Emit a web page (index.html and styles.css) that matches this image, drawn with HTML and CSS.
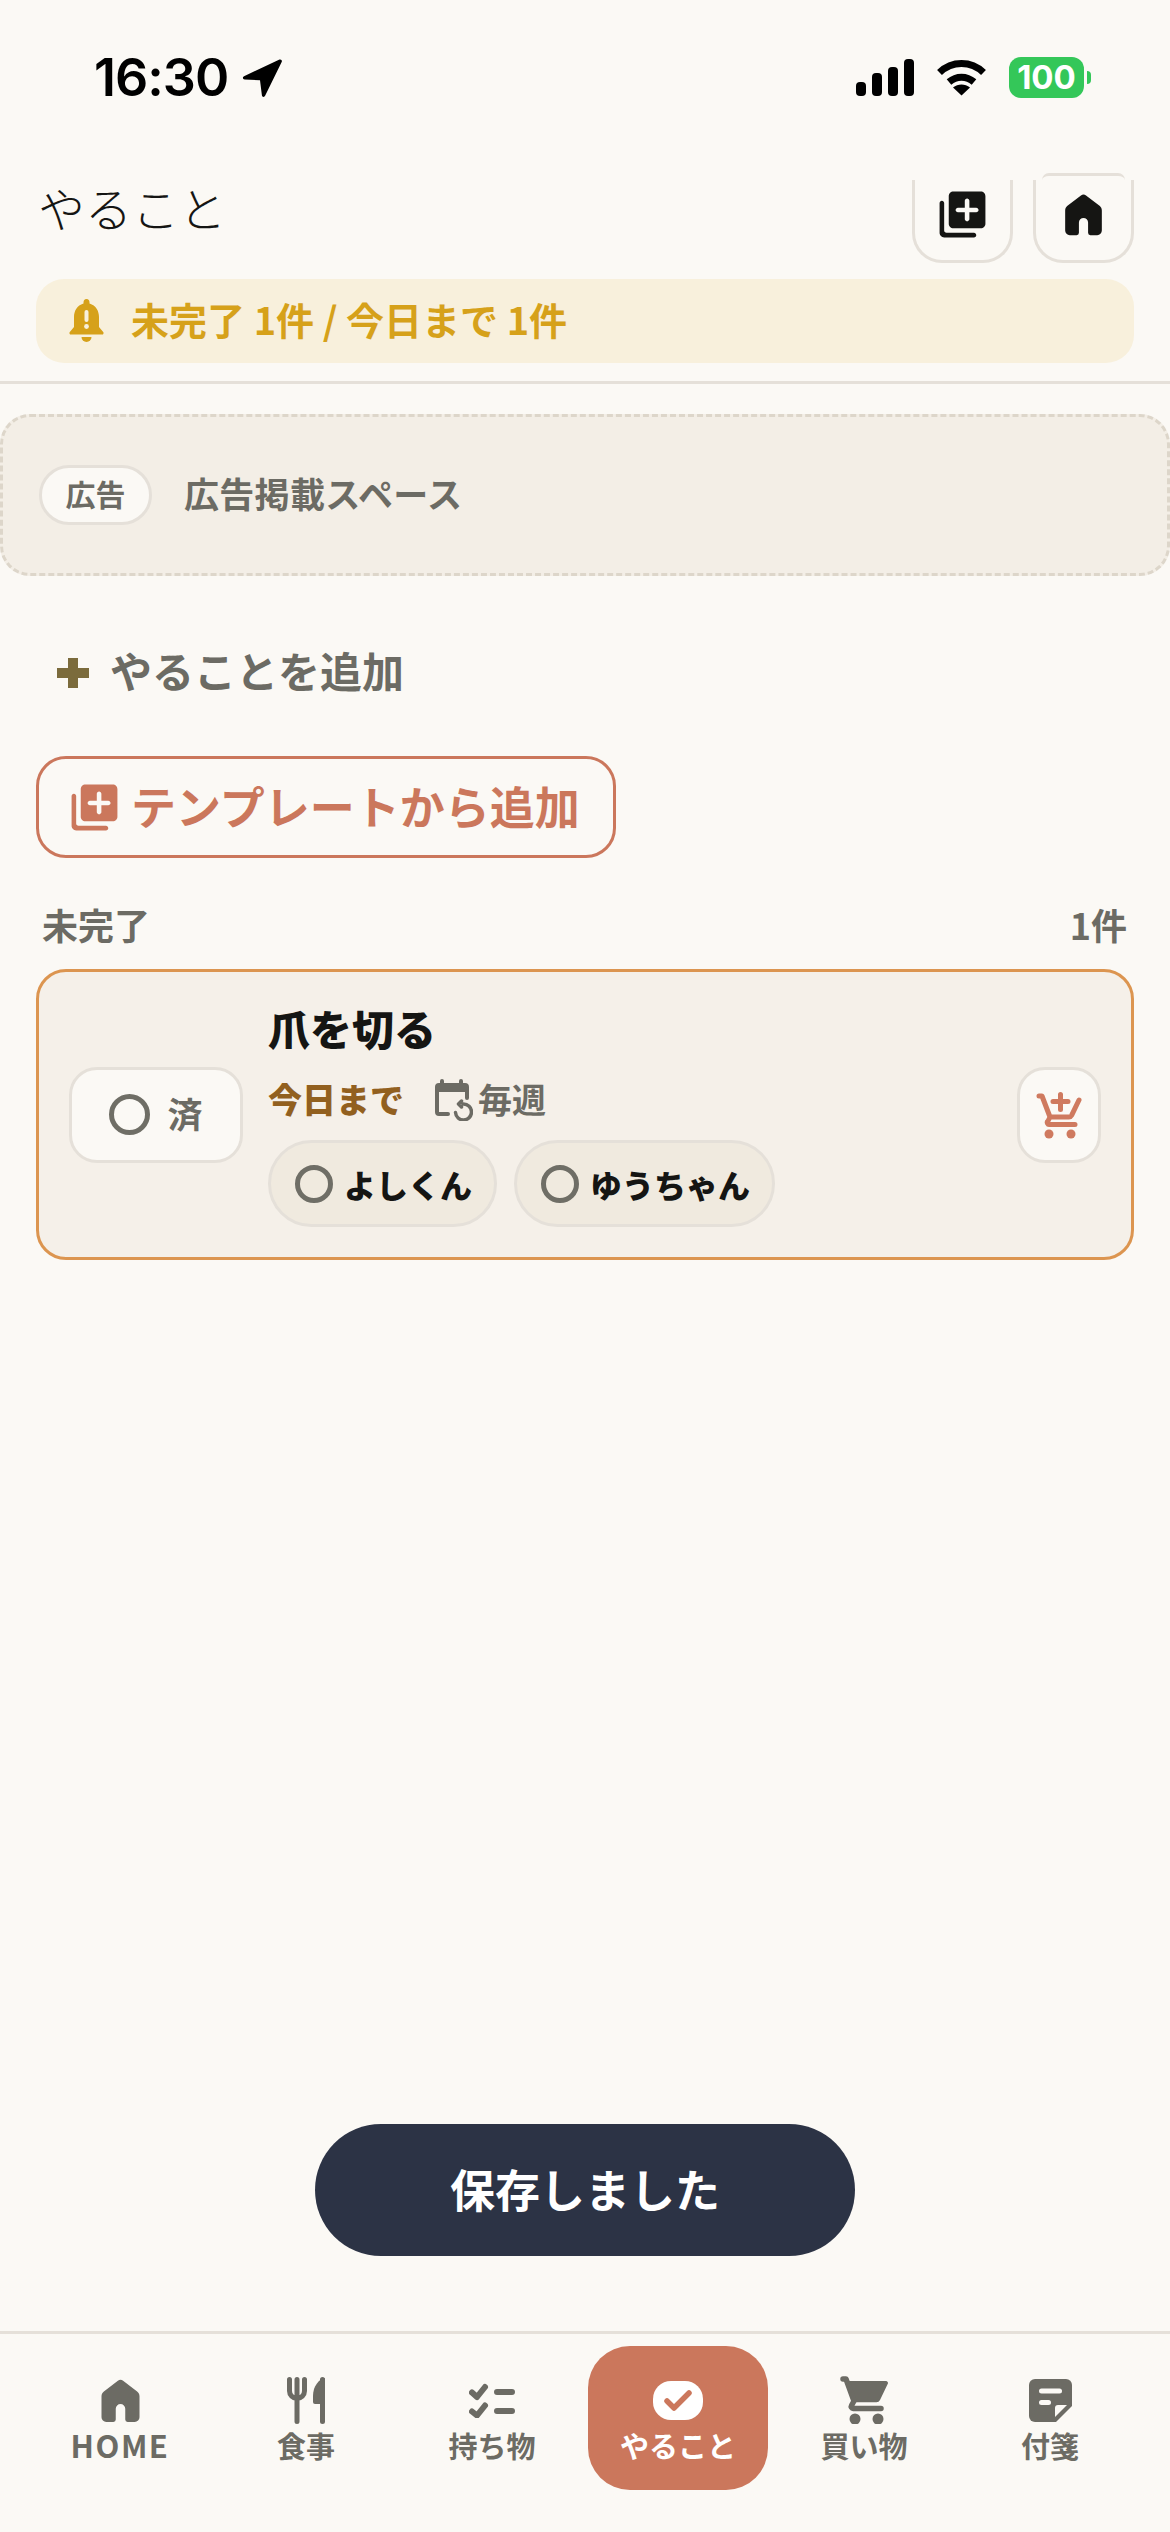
FILE: index.html
```html
<!DOCTYPE html>
<html lang="ja">
<head>
    <meta charset="UTF-8">
    <meta name="viewport" content="width=device-width, initial-scale=1.0">
    <title>やること</title>
    <link rel="stylesheet" href="styles.css">
</head>
<body>
<div class="app">

    <!-- Status bar -->
    <div class="status">
        <div class="status-left">
            <span class="time">16:30</span>
            <svg class="loc-icon" viewBox="0 0 40 38"><path d="M37.500.6 2 17.200c-1.800.9-1.300 3.200.7 3.300L18 21.300l1.900 15c.2 1.800 2.500 2.200 3.200.5L39.800 2.700c.5-1.400-.9-2.700-2.300-2.100z"/></svg>
        </div>
        <div class="status-right">
            <svg class="signal-icon" viewBox="0 0 58 37">
                <rect x="0" y="23" width="10" height="14" rx="4"/>
                <rect x="16" y="14" width="10" height="23" rx="4"/>
                <rect x="32" y="8" width="10" height="29" rx="4"/>
                <rect x="48" y="0" width="10" height="37" rx="4"/>
            </svg>
            <svg class="wifi-icon" viewBox="0 0 51 37">
                <path class="wifi-arc" d="M3.500 13.500C16 1.500 35 1.500 47.500 13.500"/>
                <path class="wifi-arc" d="M13 23C20.500 16.500 30.500 16.500 38 23"/>
                <path d="M25.500 36.500 17 28.500C22 24.500 29 24.500 34 28.500z"/>
            </svg>
            <div class="battery"><span class="battery-body">100</span><span class="battery-nub"></span></div>
        </div>
    </div>

    <!-- Header -->
    <div class="header">
        <div class="page-title">やること</div>
        <div class="header-btns">
            <div class="head-btn">
                <svg class="icon-55" viewBox="0 0 24 24"><path d="M3 6c-.55 0-1 .45-1 1v13c0 1.100.9 2 2 2h13c.55 0 1-.45 1-1s-.45-1-1-1H5c-.55 0-1-.45-1-1V7c0-.55-.45-1-1-1zm17-4H8c-1.100 0-2 .9-2 2v12c0 1.100.9 2 2 2h12c1.100 0 2-.9 2-2V4c0-1.100-.9-2-2-2zm-2 9h-3v3c0 .55-.45 1-1 1s-1-.45-1-1v-3h-3c-.55 0-1-.45-1-1s.45-1 1-1h3V6c0-.55.45-1 1-1s1 .45 1 1v3h3c.55 0 1 .45 1 1s-.45 1-1 1z"/></svg>
            </div>
            <div class="head-btn head-btn-home">
                <svg class="icon-55" viewBox="0 0 24 24"><path d="M10.900 3.700 5 8.200c-.6.5-1 1.200-1 2V19a2 2 0 0 0 2 2h3a1 1 0 0 0 1-1v-4.500a2 2 0 0 1 4 0V20a1 1 0 0 0 1 1h3a2 2 0 0 0 2-2v-8.800c0-.8-.4-1.500-1-2l-5.900-4.500a1.800 1.800 0 0 0-2.200 0z"/></svg>
            </div>
        </div>
    </div>

    <div class="alert">
        <svg class="bell-icon" viewBox="0 0 35 45">
            <path d="M17.500 0c2 0 3 1.500 3 3.500v1C27 6.500 30 12 30 18v10l4.200 5a1.500 1.500 0 0 1-1.200 2.500H2a1.500 1.500 0 0 1-1.200-2.500L5 28V18C5 12 8 6.500 14.500 4.500v-1c0-2 1-3.500 3-3.500z"/>
            <path d="M12.500 38h10a5 5 0 0 1-10 0z"/>
            <rect class="bell-mark" x="15.500" y="11" width="4" height="12" rx="2"/>
            <circle class="bell-mark" cx="17.500" cy="27.500" r="2.400"/>
        </svg>
        <span class="alert-text">未完了 1件 / 今日まで 1件</span>
    </div>
    <div class="header-line"></div>

    <!-- Ad space -->
    <div class="ad">
        <span class="ad-badge">広告</span>
        <span class="ad-text">広告掲載スペース</span>
    </div>

    <div class="add-row">
        <svg class="plus-icon" viewBox="0 0 32 30"><path d="M11 0h10v10h11v10H21v10H11V20H0V10h11z"/></svg>
        <span class="add-text">やることを追加</span>
    </div>

    <div class="template-btn">
        <svg class="icon-55" viewBox="0 0 24 24"><path d="M3 6c-.55 0-1 .45-1 1v13c0 1.100.9 2 2 2h13c.55 0 1-.45 1-1s-.45-1-1-1H5c-.55 0-1-.45-1-1V7c0-.55-.45-1-1-1zm17-4H8c-1.100 0-2 .9-2 2v12c0 1.100.9 2 2 2h12c1.100 0 2-.9 2-2V4c0-1.100-.9-2-2-2zm-2 9h-3v3c0 .55-.45 1-1 1s-1-.45-1-1v-3h-3c-.55 0-1-.45-1-1s.45-1 1-1h3V6c0-.55.45-1 1-1s1 .45 1 1v3h3c.55 0 1 .45 1 1s-.45 1-1 1z"/></svg>
        <span class="template-text">テンプレートから追加</span>
    </div>

    <div class="section-head">
        <span>未完了</span>
        <span>1件</span>
    </div>

    <!-- Todo card -->
    <div class="card">
        <div class="done-btn">
            <span class="ring"></span>
            <span class="done-text">済</span>
        </div>
        <div class="card-body">
            <div class="card-title">爪を切る</div>
            <div class="card-meta">
                <span class="due">今日まで</span>
                <svg class="repeat-icon" viewBox="0 0 40 42">
                    <path class="fill" d="M2 13V8a4 4 0 0 1 4-4h1V2a2 2 0 0 1 4 0v2h15V2a2 2 0 0 1 4 0v2h2a4 4 0 0 1 4 4v5z"/>
                    <path class="line" d="M4 12v21a2 2 0 0 0 2 2h9M34 12v7"/>
                    <path class="line-thin" d="M30 25h.5a8 8 0 1 1-8 8.500M28.500 22l-3 3 3 3"/>
                </svg>
                <span class="repeat">毎週</span>
            </div>
            <div class="chips">
                <div class="chip"><span class="ring ring-chip"></span><span>よしくん</span></div>
                <div class="chip"><span class="ring ring-chip"></span><span>ゆうちゃん</span></div>
            </div>
        </div>
        <div class="cart-btn">
            <svg class="cart-add-icon" viewBox="0 0 46 48">
                <path d="M3 5h3l8 21-2 4a2 2 0 0 0 1.700 3.500H39M14 26h19a3 3 0 0 0 2.600-1.600L43 9M24.500 3.500v15M17 10.500h15"/>
                <circle cx="13" cy="43" r="4.500"/>
                <circle cx="35" cy="43" r="4.500"/>
            </svg>
        </div>
    </div>

    <div class="spacer"></div>

    <!-- Bottom nav -->
    <div class="nav">
        <div class="nav-item">
            <div class="nav-icon">
                <svg class="icon-57" viewBox="0 0 24 24"><path d="M10.900 3.700 5 8.200c-.6.5-1 1.200-1 2V19a2 2 0 0 0 2 2h3a1 1 0 0 0 1-1v-4.500a2 2 0 0 1 4 0V20a1 1 0 0 0 1 1h3a2 2 0 0 0 2-2v-8.800c0-.8-.4-1.500-1-2l-5.900-4.500a1.800 1.800 0 0 0-2.200 0z"/></svg>
            </div>
            <span class="nav-home">HOME</span>
        </div>
        <div class="nav-item">
            <div class="nav-icon">
                <svg class="meal-icon" viewBox="0 0 38 47">
                    <path class="meal-line" d="M2.500 2.500V14a7.500 7.500 0 0 0 15 0V2.500M10 2.500v42M35.500 2.500v42"/>
                    <path d="M38 1c-6 1-12 8-12 18v6a2 2 0 0 0 2 2h10z"/>
                </svg>
            </div>
            <span>食事</span>
        </div>
        <div class="nav-item">
            <div class="nav-icon">
                <svg class="list-icon" viewBox="0 0 46 35">
                    <path d="M3 9.500l5 4.500 8-10M3 28.500l5 4 8-10M28 9h15M28 28h15"/>
                </svg>
            </div>
            <span>持ち物</span>
        </div>
        <div class="nav-item nav-item-active">
            <div class="nav-icon">
                <svg class="todo-icon" viewBox="0 0 50 39">
                    <rect class="todo-bg" width="50" height="39" rx="18"/>
                    <path class="todo-check" d="M14 20l7 7L36 12"/>
                </svg>
            </div>
            <span>やること</span>
        </div>
        <div class="nav-item">
            <div class="nav-icon">
                <svg class="cart-icon" viewBox="0 0 48 48">
                    <path d="M8 5h38a2 2 0 0 1 1.800 2.800L40 24a4 4 0 0 1-3.600 2.300H14z"/>
                    <path class="cart-line" d="M3 3h3l8 22-2.500 4.500a2 2 0 0 0 1.700 3H41"/>
                    <circle cx="15" cy="43" r="5.500"/>
                    <circle cx="38" cy="43" r="5.500"/>
                </svg>
            </div>
            <span>買い物</span>
        </div>
        <div class="nav-item">
            <div class="nav-icon">
                <svg class="note-icon" viewBox="0 0 43 43">
                    <path d="M6 0h31a6 6 0 0 1 6 6v21L27 43H6a6 6 0 0 1-6-6V6a6 6 0 0 1 6-6z"/>
                    <rect class="note-cut" x="10" y="9.500" width="23" height="5" rx="2.500"/>
                    <rect class="note-cut" x="10" y="21" width="12" height="5" rx="2.500"/>
                    <path class="note-cut" d="M26 38v-9a3 3 0 0 1 3-3h9z"/>
                </svg>
            </div>
            <span>付箋</span>
        </div>
    </div>

    <div class="toast">保存しました</div>
</div>
</body>
</html>
```

FILE: styles.css
```css
/* Page */
html, body {
    margin: 0;
    padding: 0;
    background-color: #fbf9f5;
}
.app {
    position: relative;
    width: 1170px;
    height: 2532px;
    display: flex;
    flex-direction: column;
    overflow: hidden;
    font-family: "Noto Sans CJK JP", "Noto Sans", sans-serif;
    font-weight: 700;
    color: #6c6b64;
    background-color: #fbf9f5;
}
svg {
    display: block;
    flex: none;
}

/* Status bar */
.status {
    height: 180px;
    box-sizing: border-box;
    padding: 57px 79px 0 94px;
    display: flex;
    justify-content: space-between;
    align-items: flex-start;
    color: #000;
}
.status-left {
    display: flex;
    align-items: center;
    gap: 14px;
    height: 41px;
}
.time {
    font-family: Inter, sans-serif;
    font-size: 52px;
    font-weight: 600;
    line-height: 41px;
    letter-spacing: -1px;
}
.loc-icon {
    width: 40px;
    height: 38px;
}
.status-right {
    display: flex;
    align-items: center;
    gap: 22px;
    height: 41px;
}
.signal-icon {
    width: 58px;
    height: 37px;
}
.wifi-icon {
    width: 51px;
    height: 37px;
}
.wifi-arc {
    fill: none;
    stroke: #000;
    stroke-width: 7;
}
.battery {
    display: flex;
    align-items: center;
    gap: 3px;
}
.battery-body {
    width: 75px;
    height: 41px;
    border-radius: 12px;
    background-color: #34c759;
    color: #fff;
    font-family: Inter, sans-serif;
    font-size: 33px;
    font-weight: 700;
    line-height: 41px;
    text-align: center;
}
.battery-nub {
    width: 4px;
    height: 13px;
    border-radius: 0 4px 4px 0;
    background-color: #34c759;
}

/* Header */
.header {
    height: 83px;
    padding: 0 36px;
    display: flex;
    justify-content: space-between;
    align-items: flex-start;
}
.page-title {
    margin-left: 2px;
    font-size: 47px;
    font-weight: 300;
    line-height: 54px;
    color: #151513;
}
.header-btns {
    display: flex;
    gap: 20px;
}
.head-btn {
    position: relative;
    width: 101px;
    height: 83px;
    box-sizing: border-box;
    border: 3px solid #e5e0d9;
    border-top: none;
    border-radius: 0 0 30px 30px;
    display: flex;
    align-items: flex-start;
    justify-content: center;
    fill: #151513;
}
.head-btn svg {
    margin-top: 7px;
}
.head-btn-home::before {
    content: "";
    position: absolute;
    top: -7px;
    left: 6px;
    right: 6px;
    height: 7px;
    box-sizing: border-box;
    border-top: 3px solid #e5e0d9;
    border-radius: 20px 20px 0 0;
}
.icon-55 {
    width: 55px;
    height: 55px;
}
.alert {
    margin: 16px 36px 0;
    height: 84px;
    box-sizing: border-box;
    padding-left: 33px;
    border-radius: 28px;
    background-color: #f8f0dc;
    color: #d6a11a;
    fill: #d6a11a;
    display: flex;
    align-items: center;
    gap: 27px;
    font-size: 38px;
    line-height: 50px;
}
.alert-text {
    padding-bottom: 5px;
}
.bell-icon {
    width: 35px;
    height: 45px;
}
.bell-mark {
    fill: #f8f0dc;
}
.header-line {
    margin-top: 18px;
    height: 3px;
    background-color: #e5e0d9;
}

/* Ad space */
.ad {
    margin-top: 30px;
    height: 162px;
    box-sizing: border-box;
    padding-left: 39px;
    border: 3px dashed #ddd6ca;
    border-radius: 30px;
    background-color: #f3eee6;
    display: flex;
    align-items: center;
    gap: 32px;
}
.ad-badge {
    margin-left: -3px;
    width: 113px;
    height: 60px;
    box-sizing: border-box;
    border: 3px solid #e5e0d9;
    border-radius: 30px;
    background-color: #fbf9f5;
    font-size: 30px;
    line-height: 51px;
    text-align: center;
}
.ad-text {
    padding-bottom: 5px;
    font-size: 35px;
    letter-spacing: 0.3px;
    line-height: 50px;
}

/* Add row */
.add-row {
    margin-top: 67px;
    height: 60px;
    padding-left: 57px;
    display: flex;
    align-items: center;
    gap: 21px;
    font-size: 42px;
    line-height: 60px;
}
.add-text {
    padding-bottom: 7px;
}
.plus-icon {
    width: 32px;
    height: 30px;
    fill: #7b6b3c;
}
.template-btn {
    margin: 53px 0 0 36px;
    width: 580px;
    height: 102px;
    box-sizing: border-box;
    padding-left: 28px;
    border: 3px solid #cb775c;
    border-radius: 30px;
    display: flex;
    align-items: center;
    gap: 9px;
    color: #cb775c;
    fill: #cb775c;
    font-size: 45px;
    line-height: 60px;
}
.template-text {
    padding-bottom: 3px;
}
.section-head {
    margin-top: 41px;
    height: 50px;
    padding: 0 43px 1px 42px;
    display: flex;
    justify-content: space-between;
    align-items: center;
    font-size: 36px;
    line-height: 50px;
}

/* Todo card */
.card {
    margin: 19px 36px 0;
    height: 291px;
    box-sizing: border-box;
    padding: 30px;
    border: 3px solid #dc9550;
    border-radius: 30px;
    background-color: #f5f0e9;
    display: flex;
    align-items: center;
}
.done-btn {
    width: 174px;
    height: 96px;
    box-sizing: border-box;
    border: 3px solid #e5e0d9;
    border-radius: 28px;
    background-color: #fbf9f5;
    display: flex;
    align-items: center;
    justify-content: center;
    gap: 17px;
    font-size: 35px;
    line-height: 50px;
}
.done-text {
    padding-bottom: 3px;
}
.ring {
    width: 41px;
    height: 41px;
    box-sizing: border-box;
    border: 5px solid #6f6e66;
    border-radius: 50%;
}
.ring-chip {
    width: 38px;
    height: 38px;
}
.card-body {
    margin-left: 25px;
    display: flex;
    flex-direction: column;
}
.card-title {
    height: 58px;
    font-size: 42px;
    line-height: 52px;
    font-weight: 900;
    color: #151513;
}
.card-meta {
    height: 80px;
    display: flex;
    align-items: center;
    font-size: 34px;
    line-height: 48px;
}
.due {
    padding-bottom: 2px;
    color: #92601f;
    font-weight: 900;
}
.repeat-icon {
    margin-left: 29px;
    width: 40px;
    height: 42px;
}
.repeat-icon .fill {
    fill: #6c6b64;
}
.repeat-icon .line {
    fill: none;
    stroke: #6c6b64;
    stroke-width: 4;
    stroke-linecap: round;
}
.repeat-icon .line-thin {
    fill: none;
    stroke: #6c6b64;
    stroke-width: 3.500;
    stroke-linecap: round;
    stroke-linejoin: round;
}
.repeat {
    margin-left: 5px;
    padding-bottom: 2px;
}
.chips {
    display: flex;
    gap: 17px;
}
.chip {
    height: 87px;
    box-sizing: border-box;
    padding: 0 22px 0 24px;
    border: 3px solid #e5e0d9;
    border-radius: 44px;
    background-color: #f0eadf;
    display: flex;
    align-items: center;
    gap: 11px;
    font-size: 32px;
    line-height: 50px;
    font-weight: 900;
    color: #151513;
}
.cart-btn {
    margin-left: auto;
    width: 84px;
    height: 96px;
    box-sizing: border-box;
    border: 3px solid #e5e0d9;
    border-radius: 28px;
    background-color: #fbf9f5;
    display: flex;
    align-items: center;
    justify-content: center;
}
.cart-add-icon {
    width: 46px;
    height: 48px;
    fill: #cf7a5f;
}
.cart-add-icon path {
    fill: none;
    stroke: #cf7a5f;
    stroke-width: 5;
    stroke-linecap: round;
    stroke-linejoin: round;
}
.spacer {
    flex: 1;
}

/* Bottom nav */
.nav {
    height: 201px;
    box-sizing: border-box;
    padding: 12px 30px 0;
    border-top: 3px solid #e5e0d9;
    display: grid;
    grid-template-columns: repeat(6, 180px);
    gap: 6px;
    align-items: start;
}
.nav-item {
    height: 144px;
    box-sizing: border-box;
    padding-top: 23px;
    border-radius: 42px;
    display: flex;
    flex-direction: column;
    align-items: center;
    font-size: 29px;
    line-height: 32px;
    fill: #6c6b64;
}
.nav-item-active {
    background-color: #cb775c;
    color: #fff;
}
.nav-icon {
    height: 60px;
    margin-top: 1px;
    margin-bottom: -1px;
    display: flex;
    align-items: center;
    justify-content: center;
}
.nav-home {
    font-size: 31px;
    letter-spacing: 1.500px;
}
.icon-57 {
    width: 57px;
    height: 57px;
}
.meal-icon {
    width: 38px;
    height: 47px;
}
.meal-line {
    fill: none;
    stroke: #6c6b64;
    stroke-width: 5;
    stroke-linecap: round;
}
.list-icon {
    width: 46px;
    height: 35px;
}
.list-icon path {
    fill: none;
    stroke: #6c6b64;
    stroke-width: 6;
    stroke-linecap: round;
    stroke-linejoin: round;
}
.todo-icon {
    width: 50px;
    height: 39px;
}
.todo-bg {
    fill: #fff;
}
.todo-check {
    fill: none;
    stroke: #cb775c;
    stroke-width: 5.500;
    stroke-linecap: round;
    stroke-linejoin: round;
}
.cart-icon {
    width: 48px;
    height: 48px;
}
.cart-line {
    fill: none;
    stroke: #6c6b64;
    stroke-width: 5.500;
    stroke-linecap: round;
    stroke-linejoin: round;
}
.note-icon {
    width: 43px;
    height: 43px;
}
.note-cut {
    fill: #fbf9f5;
}

/* Saved toast */
.toast {
    position: absolute;
    left: 315px;
    top: 2124px;
    width: 540px;
    height: 132px;
    border-radius: 66px;
    background-color: #2c3345;
    color: #fff;
    font-size: 45px;
    font-weight: 700;
    line-height: 129px;
    text-align: center;
}
```
